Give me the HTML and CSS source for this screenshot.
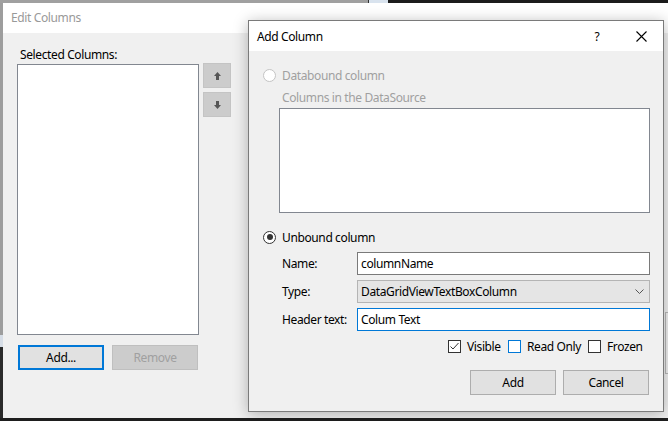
FILE: index.html
```html
<!DOCTYPE html>
<html lang="en">
<head>
<meta charset="utf-8">
<title>Add Column</title>
<link rel="stylesheet" href="styles.css">
</head>
<body>
<div class="screen">
  <div class="topstrip"><span class="ts-grey"></span><span class="ts-icon"></span><span class="ts-dark"></span></div>
  <div class="mid">
    <div class="leftstrip"><span class="ls-grey"></span><span class="ls-light"></span><span class="ls-dark"></span></div>
    <div class="editwin">
      <div class="ew-title">Edit Columns</div>
      <div class="ew-body">
        <div class="ew-left">
          <div class="ew-label">Selected Columns:</div>
          <div class="ew-listrow">
            <div class="listbox ew-list"></div>
            <div class="ew-arrows">
              <div class="arrowbtn">
                <svg width="7" height="8" viewBox="0 0 7 8"><polygon points="3.5,0 7,4 0,4" fill="#555"/><rect x="2" y="4" width="3" height="4" fill="#555"/></svg>
              </div>
              <div class="arrowbtn">
                <svg width="7" height="8" viewBox="0 0 7 8"><rect x="2" y="0" width="3" height="4" fill="#555"/><polygon points="0,4 7,4 3.5,8" fill="#555"/></svg>
              </div>
            </div>
          </div>
          <div class="ew-buttons">
            <div class="btn btn-focus">Add...</div>
            <div class="btn btn-disabled">Remove</div>
          </div>
        </div>
        <div class="ew-ghost"></div>
      </div>
    </div>
  </div>
  <div class="bottomstrip"></div>

  <div class="dialog">
    <div class="d-title">
      <span class="d-title-text">Add Column</span>
      <span class="d-help">?</span>
      <span class="d-close"><svg width="11" height="11" viewBox="0 0 11 11"><path d="M0.5 0.5 L10.5 10.5 M10.5 0.5 L0.5 10.5" stroke="#000" stroke-width="1.1" fill="none"/></svg></span>
    </div>
    <div class="d-body">
      <div class="radio-row disabled">
        <span class="radio"></span>
        <span>Databound column</span>
      </div>
      <div class="ds-label">Columns in the DataSource</div>
      <div class="listbox ds-list"></div>
      <div class="radio-row unbound">
        <span class="radio checked"><span class="dot"></span></span>
        <span>Unbound column</span>
      </div>
      <div class="form">
        <span class="f-label">Name:</span>
        <div class="textbox">columnName</div>
        <span class="f-label">Type:</span>
        <div class="combo"><span>DataGridViewTextBoxColumn</span>
          <svg width="9" height="5" viewBox="0 0 9 5"><path d="M0.5 0.5 L4.5 4.5 L8.5 0.5" stroke="#555" stroke-width="1" fill="none"/></svg>
        </div>
        <span class="f-label">Header text:</span>
        <div class="textbox focused">Colum Text</div>
      </div>
      <div class="checks">
        <div class="chk-item w60">
          <span class="chk"><svg width="11" height="11" viewBox="0 0 11 11"><path d="M1.5 5.5 L4 8 L9.5 2" stroke="#333" stroke-width="1" fill="none"/></svg></span>
          <span>Visible</span>
        </div>
        <div class="chk-item w80">
          <span class="chk blue"></span>
          <span>Read Only</span>
        </div>
        <div class="chk-item">
          <span class="chk"></span>
          <span>Frozen</span>
        </div>
      </div>
      <div class="d-buttons">
        <div class="btn">Add</div>
        <div class="btn">Cancel</div>
      </div>
    </div>
  </div>
</div>
</body>
</html>
```
FILE: styles.css
```css
* { box-sizing: border-box; }
html, body { margin: 0; padding: 0; background: #1e1e1e; }
body {
  font-family: "Noto Sans", "Open Sans", sans-serif;
  font-size: 12px;
  letter-spacing: -0.38px;
  color: #000;
}
.screen {
  position: relative;
  width: 668px;
  height: 421px;
  overflow: hidden;
  display: flex;
  flex-direction: column;
  background: #1e1e1e;
}
.topstrip { height: 3px; display: flex; }
.ts-grey { width: 369px; background: #a0a0a0; border-right: 1px solid #333; }
.ts-icon { width: 19px; background: #d9e3ee; }
.ts-dark { flex: 1; background: #1b1b1b; }

.mid { height: 415px; display: flex; }
.leftstrip { width: 3px; display: flex; flex-direction: column; }
.ls-grey { height: 332px; background: #9d9d9d; }
.ls-light { height: 12px; background: #d6dde6; }
.ls-dark { flex: 1; background: #2a2a2a; }

.editwin { flex: 1; display: flex; flex-direction: column; background: #f0f0f0; }
.ew-title {
  height: 30px;
  background: #fff;
  color: #999;
  padding-left: 8px;
  line-height: 29px;
}
.ew-body { flex: 1; display: flex; padding: 14px 0 0 14px; }
.ew-left { display: flex; flex-direction: column; }
.ew-label { height: 16px; line-height: 16px; margin-left: 3px; margin-bottom: 1px; }
.ew-listrow { display: flex; align-items: flex-start; }
.listbox { background: #fff; border: 1px solid #828790; }
.ew-list { width: 182px; height: 271px; }
.ew-arrows { display: flex; flex-direction: column; gap: 4px; margin-left: 4px; margin-top: -1px; }
.arrowbtn {
  width: 28px; height: 25px;
  background: #cccccc;
  border: 1px solid #c4c4c4;
  display: flex; align-items: center; justify-content: center;
}
.ew-buttons { display: flex; gap: 8px; margin-top: 10px; margin-left: 1px; }
.btn {
  width: 86px; height: 25px;
  background: #e1e1e1;
  border: 1px solid #adadad;
  display: flex; align-items: center; justify-content: center;
}
.btn-focus { border: 2px solid #0078d7; }
.btn-disabled { background: #cccccc; border-color: #bfbfbf; color: #a0a0a0; }
.ew-ghost {
  margin-left: auto;
  margin-top: 265px;
  width: 3px;
  height: 62px;
  border-top: 1px solid #b8b8b8;
  border-bottom: 1px solid #b8b8b8;
  border-left: 1px solid #b8b8b8;
}
.bottomstrip { height: 3px; background: #1e1e1e; }

/* Add Column dialog (overlay window) */
.dialog {
  position: absolute;
  left: 248px;
  top: 20px;
  width: 416px;
  height: 392px;
  border: 1px solid #7a7a7a;
  background: #f0f0f0;
  box-shadow: 0 2px 14px rgba(0, 0, 0, 0.28);
  display: flex;
  flex-direction: column;
}
.d-title {
  height: 30px;
  background: #fff;
  display: flex;
  align-items: center;
  padding-left: 8px;
}
.d-title-text { flex: 1; }
.d-help { width: 46px; text-align: center; font-size: 12px; }
.d-close { width: 43px; display: flex; align-items: center; justify-content: center; }
.d-body { flex: 1; display: flex; flex-direction: column; padding: 16px 13px 0 14px; }
.radio-row { display: flex; align-items: center; gap: 6px; height: 16px; }
.radio-row.disabled { color: #a0a0a0; }
.radio-row.unbound { margin-top: 16px; }
.radio {
  width: 13px; height: 13px;
  border-radius: 50%;
  border: 1px solid #c4c4c4;
  background: #fff;
  display: flex; align-items: center; justify-content: center;
}
.radio.checked { border-color: #333; }
.dot { width: 6px; height: 6px; border-radius: 50%; background: #333; }
.ds-label { color: #a0a0a0; margin: 7px 0 0 19px; height: 16px; line-height: 16px; }
.ds-list { margin: 2px 0 0 16px; width: 371px; height: 105px; }

.form {
  display: grid;
  grid-template-columns: 75px 1fr;
  grid-auto-rows: 23px;
  row-gap: 5px;
  margin: 7px 0 0 19px;
  align-items: center;
}
.textbox {
  height: 23px;
  background: #fff;
  border: 1px solid #7a7a7a;
  padding-left: 3px;
  display: flex; align-items: center;
}
.textbox.focused { border-color: #0078d7; }
.combo {
  height: 23px;
  background: #e5e5e5;
  border: 1px solid #b4b4b4;
  padding: 0 5px 0 3px;
  display: flex; align-items: center; justify-content: space-between;
}
.checks { display: flex; margin: 7px 0 0 185px; height: 16px; align-items: center; }
.chk-item { display: flex; align-items: center; gap: 6px; }
.w60 { width: 60px; }
.w80 { width: 80px; }
.chk {
  width: 13px; height: 13px;
  border: 1px solid #333;
  background: #fff;
  display: flex; align-items: center; justify-content: center;
}
.chk.blue { border-color: #0078d7; }
.d-buttons { display: flex; justify-content: flex-end; gap: 7px; margin-top: 16px; margin-right: 1px; }
```
